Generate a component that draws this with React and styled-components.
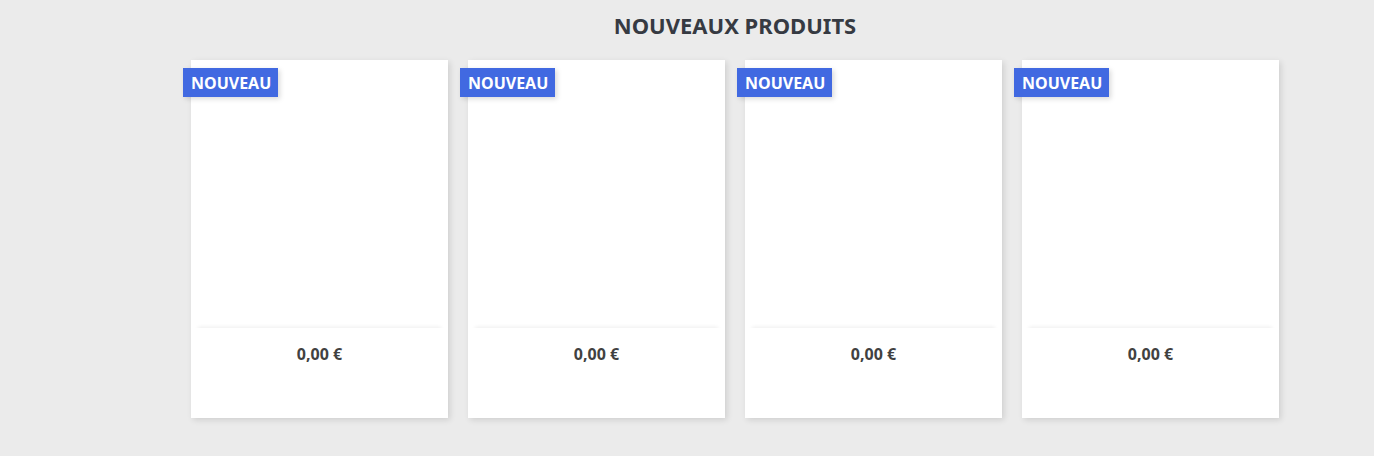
import React from 'react'
import styled, { createGlobalStyle } from 'styled-components'

const GlobalStyle = createGlobalStyle`
  body {
    margin: 0;
    background: #ebebeb;
    font-family: "Noto Sans", "Open Sans", sans-serif;
  }
`

const Section = styled.section`
  width: 1088px;
  margin-left: 191px;
  padding-top: 10px;
  height: 446px;
`

const Title = styled.h2`
  margin: 0 0 20px;
  text-align: center;
  font-size: 22px;
  line-height: 30px;
  font-weight: 700;
  color: #363a42;
  text-transform: uppercase;
`

const Grid = styled.div`
  display: grid;
  grid-template-columns: repeat(4, 257px);
  gap: 20px;
`

const Card = styled.article`
  position: relative;
  height: 358px;
  background: #fff;
  box-shadow: 2px 2px 6px 0 rgba(0, 0, 0, 0.12);
  display: flex;
  flex-direction: column;
`

const Thumb = styled.div`
  height: 268px;
`

const Description = styled.div`
  margin: 0 4px;
  padding-top: 14px;
  text-align: center;
  line-height: 24px;
  box-shadow: 0 -4px 4px -3px rgba(0, 0, 0, 0.07);
  flex: 1;
`

const Price = styled.span`
  font-size: 16px;
  font-weight: 700;
  color: #414141;
`

const Flag = styled.span`
  position: absolute;
  left: -8px;
  top: 8px;
  height: 29px;
  padding: 0 7px 0 8px;
  display: flex;
  align-items: center;
  background: #4169e1;
  color: #fff;
  font-size: 16px;
  font-weight: 700;
  text-transform: uppercase;
  box-shadow: 2px 2px 5px 0 rgba(0, 0, 0, 0.15);
`

const products = [1, 2, 3, 4]

export default function App() {
  return (
    <>
      <GlobalStyle />
      <Section>
        <Title>Nouveaux produits</Title>
        <Grid>
          {products.map((p) => (
            <Card key={p}>
              <Flag>Nouveau</Flag>
              <Thumb />
              <Description>
                <Price>0,00 €</Price>
              </Description>
            </Card>
          ))}
        </Grid>
      </Section>
    </>
  )
}
